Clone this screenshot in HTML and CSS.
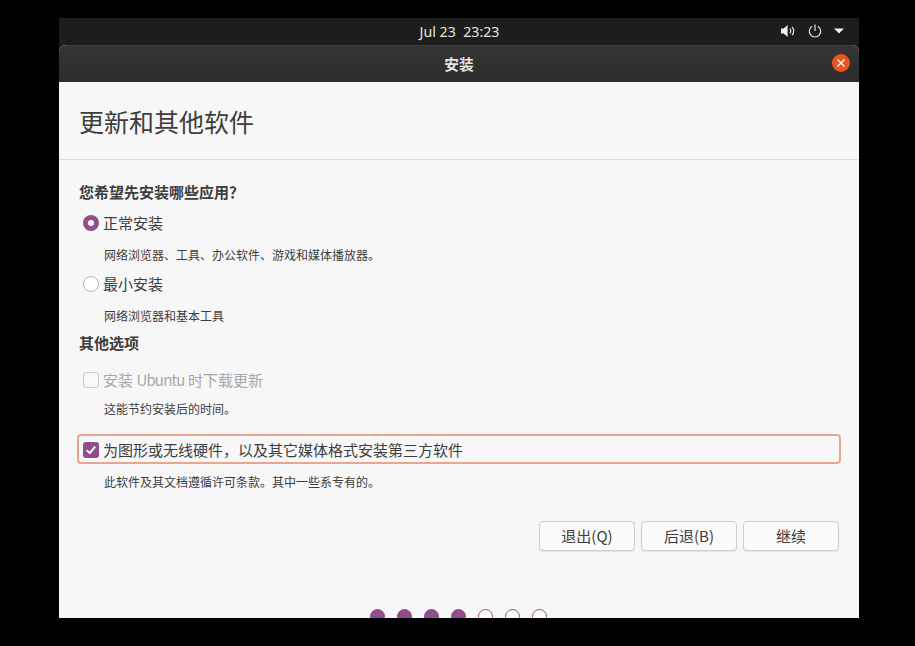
FILE: index.html
```html
<!DOCTYPE html>
<html lang="zh-CN">
<head>
<meta charset="utf-8">
<title>安装</title>
<link rel="stylesheet" href="styles.css">
</head>
<body>
<div class="screen">
  <header class="topbar">
    <div class="clock">Jul 23&nbsp; 23:23</div>
    <div class="tray">
      <svg class="ic-vol" width="16" height="14" viewBox="0 0 16 14"><path d="M1 4.5h2.6L7.6 1v12L3.6 9.5H1z" fill="#f0f0f0"/><path d="M9.8 4.8a3 3 0 0 1 0 4.4M12 2.8a6 6 0 0 1 0 8.4" fill="none" stroke="#e8e8e8" stroke-width="1.2"/></svg>
      <svg class="ic-pow" width="14" height="14" viewBox="0 0 14 14"><path d="M4.2 2.3a5.7 5.7 0 1 0 5.6 0" fill="none" stroke="#e8e8e8" stroke-width="1.1"/><path d="M7 .5v6.4" stroke="#e8e8e8" stroke-width="1.2"/></svg>
      <svg class="ic-arrow" width="10" height="6" viewBox="0 0 10 6"><path d="M0 .5h10L5 5.5z" fill="#f0f0f0"/></svg>
    </div>
  </header>
  <main class="window">
    <div class="titlebar">
      <span class="wintitle">安装</span>
      <span class="close"><svg width="10" height="10" viewBox="0 0 10 10"><path d="M1.5 1.5l7 7M8.5 1.5l-7 7" stroke="#fff" stroke-width="1.4" fill="none"/></svg></span>
    </div>
    <div class="pagehead"><h1>更新和其他软件</h1></div>
    <div class="content">
      <h2 class="section first">您希望先安装哪些应用<span class="qmark">？</span></h2>
      <div class="opt opt-a"><span class="radio on"></span><span>正常安装</span></div>
      <p class="desc wide">网络浏览器、工具、办公软件、游戏和媒体播放器。</p>
      <div class="opt opt-b"><span class="radio"></span><span>最小安装</span></div>
      <p class="desc wide">网络浏览器和基本工具</p>
      <h2 class="section second">其他选项</h2>
      <div class="opt opt-c disabled"><span class="check"></span><span>安装 <span class="latin">Ubuntu</span> 时下载更新</span></div>
      <p class="desc">这能节约安装后的时间。</p>
      <div class="opt focused"><span class="check on"><svg width="12" height="12" viewBox="0 0 12 12"><path d="M1.8 6.2l3 3 5.4-6.6" fill="none" stroke="#fff" stroke-width="1.9"/></svg></span><span>为图形或无线硬件，以及其它媒体格式安装第三方软件</span></div>
      <p class="desc spaced">此软件及其文档遵循许可条款。其中一些系专有的。</p>
      <div class="buttons">
        <button class="btn">退出(Q)</button>
        <button class="btn">后退(B)</button>
        <button class="btn">继续</button>
      </div>
    </div>
    <div class="dots">
      <i class="dot on"></i><i class="dot on"></i><i class="dot on"></i><i class="dot on"></i><i class="dot"></i><i class="dot"></i><i class="dot"></i>
    </div>
  </main>
</div>
</body>
</html>
```
FILE: styles.css
```css
* { box-sizing: border-box; }
html, body { margin: 0; height: 100%; background: #000; overflow: hidden; }
body { padding: 18px 0 0 59px; font-family: "Noto Sans CJK SC", "Noto Sans", sans-serif; color: #3d3d3d; }
.screen { width: 800px; height: 600px; display: flex; flex-direction: column; overflow: hidden; background: #1d1d1d; }
.topbar { height: 27px; flex: none; display: flex; align-items: center; justify-content: center; position: relative; background: #1d1d1d; }
.clock { font: 14.2px "Noto Sans", sans-serif; color: #e4e4e4; line-height: 27px; margin-left: 1px; }
.tray { position: absolute; right: 15px; top: 6px; display: flex; align-items: center; }
.ic-pow { margin-left: 12px; }
.ic-arrow { margin-left: 12px; }
.window { flex: 1; display: flex; flex-direction: column; background: #f7f7f7; min-height: 0; border-radius: 7px 7px 0 0; overflow: hidden; }
.titlebar { height: 37px; flex: none; position: relative; display: flex; align-items: center; justify-content: center; background: linear-gradient(#353535, #2c2c2c); border-top: 1px solid #3f3f3f; }
.wintitle { font-size: 14.7px; font-weight: 700; color: #e6e6e6; line-height: 1; }
.close { position: absolute; right: 9px; top: 8px; width: 18px; height: 18px; border-radius: 50%; background: #e95420; display: flex; align-items: center; justify-content: center; }
.pagehead { height: 78px; flex: none; border-bottom: 1px solid #dadada; padding: 21px 0 0 20px; }
h1 { margin: 0; font-size: 25px; font-weight: 400; line-height: 36px; color: #3d3d3d; }
.content { flex: 1; padding: 0 19px 0 18px; display: flex; flex-direction: column; min-height: 0; }
.section { margin: 0 0 0 2px; font-size: 15px; font-weight: 700; line-height: 20px; color: #3d3d3d; }
.section.first { margin-top: 22px; }
.section.second { margin-top: 9px; }
.qmark { font-family: "Noto Sans CJK TC", sans-serif; }
.latin { letter-spacing: -0.8px; }
.opt { display: flex; align-items: center; gap: 4px; height: 26px; font-size: 15px; line-height: 26px; padding-left: 6px; }
.opt-a { margin-top: 8px; }
.opt-b { margin-top: 8px; }
.opt-c { margin-top: 14px; }
.disabled { color: #a8a8a8; }
.focused { margin-top: 17px; height: 30px; width: 764px; border: 2px solid #e8a68f; border-radius: 4px; padding: 1px 0 0 4px; }
.radio { width: 16px; height: 16px; border-radius: 50%; border: 1px solid #b5b5b5; background: #fff; flex: none; }
.radio.on { background: #924d8b; border: 0; position: relative; }
.radio.on::after { content: ""; position: absolute; left: 5px; top: 5px; width: 6px; height: 6px; border-radius: 50%; background: #fff; }
.check { width: 16px; height: 16px; border-radius: 3px; border: 1px solid #c9c9c9; background: #f8f8f8; flex: none; display: flex; align-items: center; justify-content: center; }
.check.on { background: #924d8b; border: 0; }
.desc { margin: 8px 0 0 27px; font-size: 12px; line-height: 16px; color: #3d3d3d; }
.desc.wide { margin-top: 11px; }
.desc.spaced { margin-top: 10px; }
.buttons { display: flex; justify-content: flex-end; gap: 6px; margin-top: 31px; padding-right: 1px; }
.btn { width: 96px; height: 30px; border: 1px solid #cfcbc8; border-radius: 4px; background: #fafafa; box-shadow: 0 1px 1px rgba(0,0,0,.07); font: 15px "Noto Sans CJK SC", "Noto Sans", sans-serif; color: #3d3d3d; padding: 0 0 2px; }
.dots { flex: none; height: 9px; display: flex; justify-content: center; gap: 12px; padding-right: 2px; overflow: hidden; }
.dot { flex: none; width: 15px; height: 15px; border-radius: 50%; border: 1px solid #924d8b; background: #fff; }
.dot.on { background: #924d8b; }
```
